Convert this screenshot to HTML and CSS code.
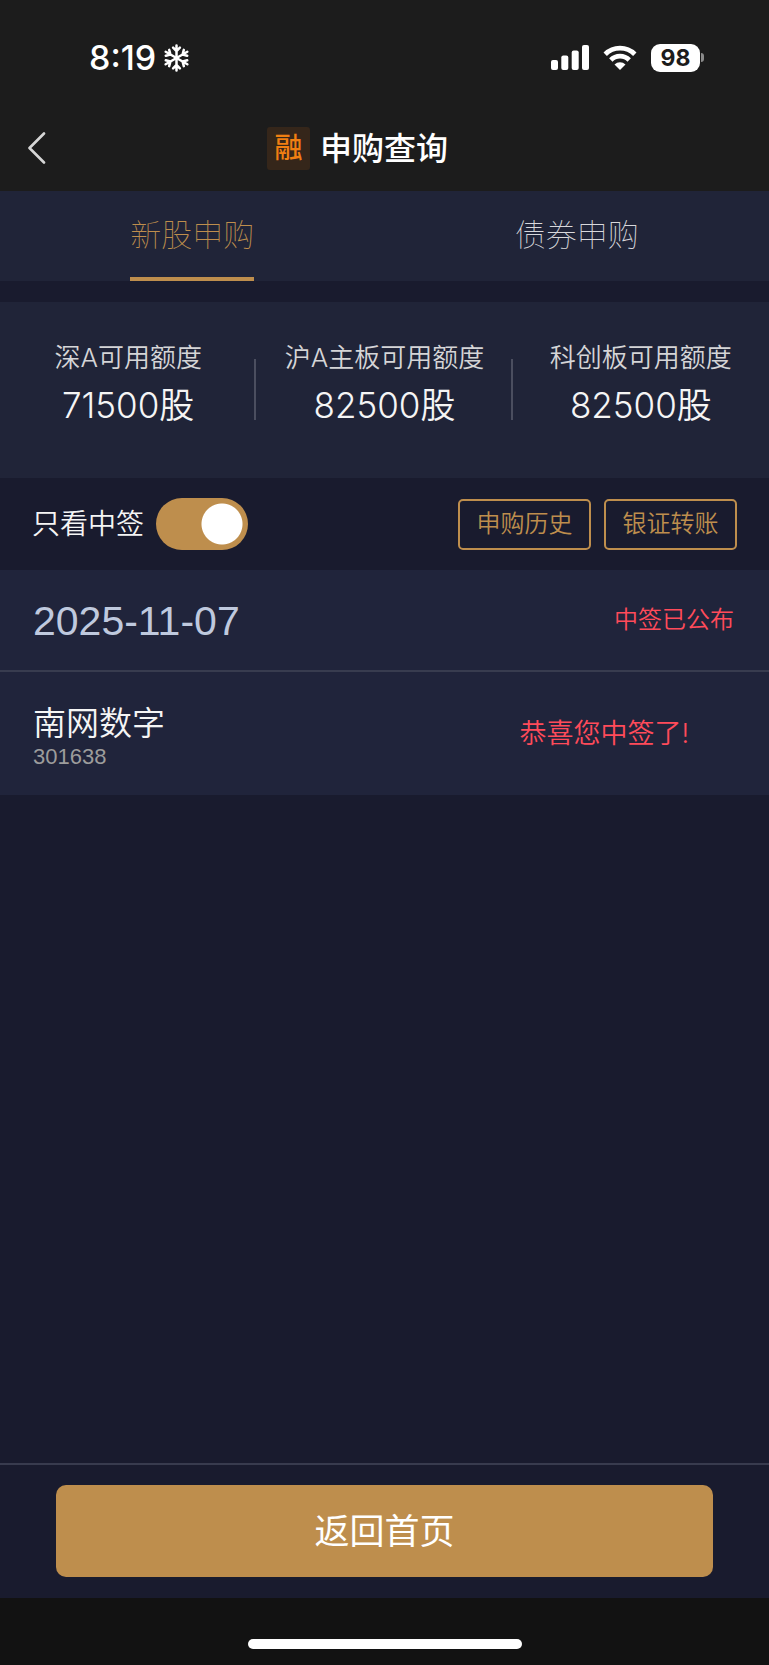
FILE: index.html
```html
<!DOCTYPE html>
<html lang="zh-CN">
<head>
<meta charset="utf-8">
<meta name="viewport" content="width=device-width, initial-scale=1">
<title>申购查询</title>
<link rel="stylesheet" href="styles.css">
</head>
<body>
<div class="screen">
  <header class="top">
    <div class="status">
      <div class="status-left">
        <span class="clock">8:19</span>
        <svg class="snow" viewBox="0 0 24 28" fill="none" stroke="#fff" stroke-width="2.500" stroke-linecap="round" stroke-linejoin="round" aria-hidden="true">
          <g id="arm"><path d="M12 14V1.500M8.600 3.600L12 7l3.400-3.400"/></g>
          <use href="#arm" transform="rotate(60 12 14)"/>
          <use href="#arm" transform="rotate(120 12 14)"/>
          <use href="#arm" transform="rotate(180 12 14)"/>
          <use href="#arm" transform="rotate(240 12 14)"/>
          <use href="#arm" transform="rotate(300 12 14)"/>
        </svg>
      </div>
      <div class="status-right">
        <svg class="signal" viewBox="0 0 38 25" fill="#fff" aria-hidden="true">
          <rect x="0" y="15" width="7" height="10" rx="2"/>
          <rect x="10.300" y="10.500" width="7" height="14.500" rx="2"/>
          <rect x="20.700" y="5.500" width="7" height="19.500" rx="2"/>
          <rect x="31" y="0" width="7" height="25" rx="2"/>
        </svg>
        <svg class="wifi" viewBox="0 0 34 25" aria-hidden="true">
          <g fill="none" stroke="#fff" stroke-width="4.800">
            <path d="M2.200 9.200a21 21 0 0 1 29.600 0"/>
            <path d="M7.800 15a13 13 0 0 1 18.400 0"/>
          </g>
          <path d="M17 25l-5.500-5.600a8 8 0 0 1 11 0z" fill="#fff"/>
        </svg>
        <div class="battery"><span class="battery-level">98</span><span class="battery-tip"></span></div>
      </div>
    </div>
    <div class="navbar">
      <button class="back" type="button" aria-label="返回">
        <svg viewBox="0 0 18 32" fill="none" stroke="#d6d6d6" stroke-width="2.600" stroke-linecap="round" stroke-linejoin="round" aria-hidden="true"><path d="M16 1.500L1.500 16 16 30.500"/></svg>
      </button>
      <div class="title-group">
        <span class="badge">融</span>
        <h1 class="title">申购查询</h1>
      </div>
    </div>
  </header>

  <nav class="tabs">
    <button class="tab tab-active" type="button">新股申购</button>
    <button class="tab" type="button">债券申购</button>
  </nav>

  <section class="quotas">
    <div class="quota"><span class="quota-label">深A可用额度</span><span class="quota-value">71500股</span></div>
    <div class="quota"><span class="quota-label">沪A主板可用额度</span><span class="quota-value">82500股</span></div>
    <div class="quota"><span class="quota-label">科创板可用额度</span><span class="quota-value">82500股</span></div>
  </section>

  <section class="filters">
    <label class="only-won">只看中签<input class="switch" type="checkbox" role="switch" checked></label>
    <div class="actions">
      <button class="outline" type="button">申购历史</button>
      <button class="outline" type="button">银证转账</button>
    </div>
  </section>

  <main class="list">
    <div class="day">
      <time class="date" datetime="2025-11-07">2025-11-07</time>
      <span class="published">中签已公布</span>
    </div>
    <div class="stock">
      <div class="stock-info">
        <span class="stock-name">南网数字</span>
        <span class="stock-code">301638</span>
      </div>
      <span class="result">恭喜您中签了!</span>
    </div>
  </main>

  <footer class="bottom">
    <button class="home" type="button">返回首页</button>
  </footer>
  <div class="home-area"><span class="home-bar"></span></div>
</div>
</body>
</html>
```
FILE: styles.css
```css
* {
  box-sizing: border-box;
}

body {
  margin: 0;
  background: #191b2e;
  color: #f5f5f5;
  font-family: Inter, "Noto Sans CJK SC", sans-serif;
}

button {
  margin: 0;
  padding: 0;
  border: 0;
  background: none;
  color: inherit;
  font-family: inherit;
}

.screen {
  display: flex;
  flex-direction: column;
  min-height: 100vh;
}

.top {
  background: #1c1c1c;
}

.status {
  display: flex;
  justify-content: space-between;
  align-items: center;
  height: 106px;
  padding: 9px 65px 0 89px;
}

.status-left,
.status-right {
  display: flex;
  align-items: center;
}

.status-left {
  gap: 8px;
}

.status-right {
  gap: 14px;
}

.clock {
  color: #fff;
  font-size: 34px;
  font-weight: 550;
  line-height: 42px;
}

.snow {
  width: 25px;
  height: 28px;
}

.signal {
  width: 38px;
  height: 25px;
}

.wifi {
  width: 34px;
  height: 25px;
}

.battery {
  display: flex;
  align-items: center;
  gap: 1px;
}

.battery-level {
  width: 49px;
  border-radius: 9px;
  background: #fff;
  color: #1c1c1c;
  font-size: 23px;
  font-weight: 700;
  line-height: 28px;
  text-align: center;
}

.battery-tip {
  width: 3px;
  height: 9px;
  border-radius: 0 3px 3px 0;
  background: #8a8a8a;
}

.navbar {
  display: grid;
  grid-template-columns: 1fr auto 1fr;
  align-items: center;
  height: 85px;
  padding: 0 28px 1px;
}

.back {
  display: flex;
  width: 18px;
  height: 32px;
}

.back svg {
  width: 100%;
  height: 100%;
}

.title-group {
  display: flex;
  align-items: center;
  gap: 10px;
  padding-right: 54px;
}

.badge {
  width: 43px;
  border-radius: 3px;
  background: #35261a;
  color: #f07f12;
  font-size: 28px;
  font-weight: 500;
  line-height: 43px;
  text-align: center;
}

.title {
  margin: 0;
  color: #fff;
  font-size: 32px;
  font-weight: 500;
  line-height: 48px;
  padding-top: 2px;
}

.tabs {
  display: grid;
  grid-template-columns: 1fr 1fr;
  justify-items: center;
  background: #202438;
}

.tab {
  height: 90px;
  border-top: 2px solid transparent;
  border-bottom: 4px solid transparent;
  color: #d8d8dc;
  font-size: 31px;
  font-weight: 100;
  line-height: 80px;
}

.tab-active {
  border-bottom-color: #be8e4d;
  color: #be8e4d;
}

.quotas {
  display: grid;
  grid-template-columns: repeat(3, 1fr);
  margin-top: 21px;
  padding: 37px 0 50px;
  background: #202438;
}

.quota {
  display: flex;
  flex-direction: column;
  align-items: center;
  gap: 6px;
  background: linear-gradient(#4b4e5f, #4b4e5f) right 20px / 2px 61px no-repeat;
}

.quota:last-child {
  background: none;
}

.quota-label {
  color: #d5d5d7;
  font-size: 26px;
  font-weight: 350;
  line-height: 38px;
}

.quota-value {
  font-size: 35px;
  font-weight: 350;
  line-height: 45px;
}

.filters {
  display: flex;
  justify-content: space-between;
  align-items: center;
  height: 92px;
  padding: 0 32px;
}

.only-won {
  display: flex;
  align-items: center;
  gap: 12px;
  font-size: 28px;
  font-weight: 350;
  line-height: 40px;
}

.switch {
  width: 92px;
  height: 52px;
  margin: 0;
  border-radius: 26px;
  appearance: none;
  background: radial-gradient(circle at 66px 26px, #fff 20px, #be8e4d 21px);
}

.switch:not(:checked) {
  background: radial-gradient(circle at 26px 26px, #fff 20px, #555868 21px);
}

.actions {
  display: flex;
  gap: 13px;
}

.outline {
  width: 133px;
  height: 51px;
  border: 2px solid #be8e4d;
  border-radius: 5px;
  color: #be8e4d;
  font-size: 24px;
  font-weight: 350;
  line-height: 36px;
}

.list {
  background: #20243b;
}

.day {
  display: flex;
  justify-content: space-between;
  align-items: center;
  height: 102px;
  padding: 0 35px 0 33px;
  border-bottom: 2px solid #383c4f;
}

.date {
  padding-top: 2px;
  color: #bfc9de;
  font-family: "Liberation Sans", sans-serif;
  font-size: 41px;
  line-height: 48px;
}

.published {
  color: #ff4b5a;
  font-size: 24px;
  font-weight: 350;
  line-height: 36px;
}

.stock {
  display: flex;
  justify-content: space-between;
  align-items: center;
  padding: 30px 80px 25px 33px;
}

.stock-info {
  display: flex;
  flex-direction: column;
}

.stock-name {
  font-size: 33px;
  font-weight: 350;
  line-height: 42px;
}

.stock-code {
  color: #9c9c9c;
  font-family: "Liberation Sans", sans-serif;
  font-size: 22px;
  line-height: 26px;
}

.result {
  padding-bottom: 4px;
  color: #ff4b5a;
  font-size: 27px;
  font-weight: 350;
  line-height: 38px;
}

.bottom {
  margin-top: auto;
  padding: 20px 56px 21px;
  border-top: 2px solid #383b4e;
}

.home {
  display: block;
  width: 100%;
  height: 92px;
  border-radius: 10px;
  background: #be8e4d;
  color: #fff;
  font-size: 35px;
  font-weight: 400;
  line-height: 52px;
}

.home-area {
  display: flex;
  justify-content: center;
  height: 67px;
  padding-top: 41px;
  background: #121212;
}

.home-bar {
  width: 274px;
  height: 10px;
  border-radius: 5px;
  background: #fff;
}
```
